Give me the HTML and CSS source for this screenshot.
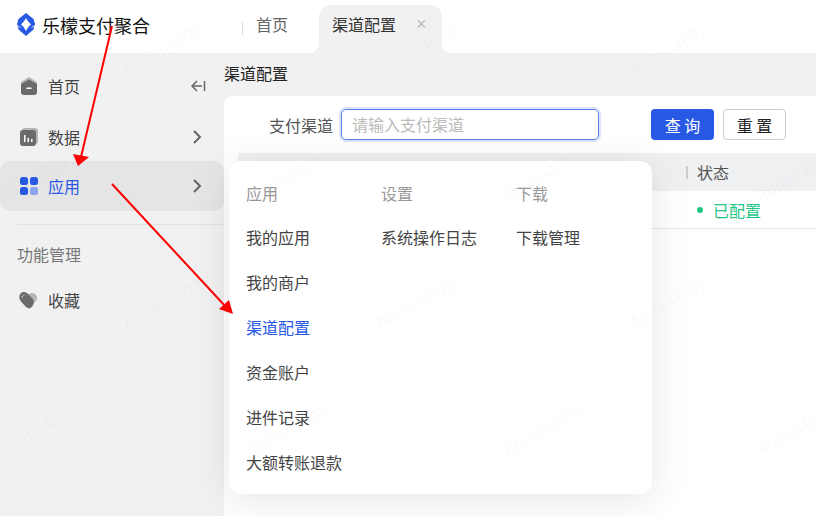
FILE: index.html
```html
<!DOCTYPE html>
<html lang="zh-CN">
<head>
<meta charset="utf-8">
<title>乐檬支付聚合</title>
<link rel="stylesheet" href="styles.css">
</head>
<body>
<div class="app">
  <header class="topbar">
    <div class="brand">
      <svg class="logo" viewBox="0 0 18 23" width="18" height="23"><path fill="#2759e5" fill-rule="evenodd" d="M9 0 16.500 6 18 11 16.500 16.500 9 23 1.500 16.500 0 11 1.500 6ZM9 5Q10.500 8.500 14 11.500 10.500 14 9 18 7.500 14 4 11.500 7.500 8.500 9 5Z"/><path d="M0 12.500 3.500 14.500M18 12.500 14.500 14.500" stroke="#fff" stroke-width=".8"/></svg>
      <span class="brand-name">乐檬支付聚合</span>
    </div>
    <nav class="tabs">
      <span class="tab-sep"></span>
      <span class="tab">首页</span>
      <span class="tab tab-active">渠道配置<span class="tab-close">×</span></span>
    </nav>
  </header>
  <div class="body">
    <aside class="sidebar">
      <div class="side-item">
        <svg class="side-icon" viewBox="0 0 18 18" width="18" height="18"><path fill="#b5b5b5" d="M9 0 17 5v4H1V5z"/><path d="M1 7 9 2.500 17 7v8a3 3 0 0 1-3 3H4a3 3 0 0 1-3-3z" fill="#6b6b6b"/><rect x="6.500" y="10.500" width="5" height="1.500" fill="#fff"/></svg>
        <span class="side-label">首页</span>
        <svg class="side-collapse" viewBox="0 0 16 14" width="16" height="14"><path d="M7 2 2 7l5 5M2 7h10M14.500 2v10" fill="none" stroke="#666" stroke-width="1.500"/></svg>
      </div>
      <div class="side-item side-item-data">
        <svg class="side-icon" viewBox="0 0 18 18" width="18" height="18"><rect x="2" y="0" width="16" height="16" rx="3" fill="#b5b5b5"/><rect y="2" width="16" height="16" rx="3" fill="#6b6b6b"/><path d="M4 7h1.500v7H4zM7.500 10H9v4H7.500zM11 11h1.500v3H11z" fill="#fff"/></svg>
        <span class="side-label">数据</span>
        <svg class="side-chevron" viewBox="0 0 10 16" width="10" height="16"><path d="m2 2 6 6-6 6" fill="none" stroke="#666" stroke-width="2"/></svg>
      </div>
      <div class="side-item side-item-active">
        <svg class="side-icon" viewBox="0 0 18 18" width="18" height="18"><rect width="8" height="8" rx="2.500" fill="#2759e5"/><rect x="10" width="8" height="8" rx="2.500" fill="#2759e5"/><rect y="10" width="8" height="8" rx="2.500" fill="#2759e5"/><rect x="10" y="10" width="8" height="8" rx="2.500" fill="#8aa5ee"/></svg>
        <span class="side-label">应用</span>
        <svg class="side-chevron" viewBox="0 0 10 16" width="10" height="16"><path d="m2 2 6 6-6 6" fill="none" stroke="#666" stroke-width="2"/></svg>
      </div>
      <div class="side-divider"></div>
      <div class="side-title">功能管理</div>
      <div class="side-item side-item-fav">
        <svg class="side-icon" viewBox="0 0 20 17" width="20" height="17"><path d="M9 3a5 5 0 1 1 8 6l-5 5z" fill="#b5b5b5"/><path d="M5 0c2 0 3 1 4 2l4 4c2 2 2.500 5 .5 8s-4 3-6.500 1L2 9.500C-1.500 5 1 0 5 0z" fill="#6b6b6b"/><path d="M3 6c0-1.500 1-3 2.500-3" stroke="#ccc" fill="none"/></svg>
        <span class="side-label">收藏</span>
      </div>
    </aside>
    <main class="main">
      <div class="crumb">渠道配置</div>
      <section class="card">
        <form class="search">
          <label class="search-label">支付渠道</label>
          <div class="search-input">请输入支付渠道</div>
          <button type="button" class="btn btn-primary">查 询</button>
          <button type="button" class="btn btn-plain">重 置</button>
        </form>
        <div class="table-head"><span class="th-state">状态</span></div>
        <div class="table-row"><span class="state"><i class="dot"></i>已配置</span></div>
      </section>
    </main>
  </div>

  <div class="menu">
    <div class="menu-col menu-col-app">
      <div class="menu-title">应用</div>
      <div class="menu-link">我的应用</div>
      <div class="menu-link">我的商户</div>
      <div class="menu-link menu-link-active">渠道配置</div>
      <div class="menu-link">资金账户</div>
      <div class="menu-link">进件记录</div>
      <div class="menu-link">大额转账退款</div>
    </div>
    <div class="menu-col menu-col-set">
      <div class="menu-title">设置</div>
      <div class="menu-link">系统操作日志</div>
    </div>
    <div class="menu-col">
      <div class="menu-title">下载</div>
      <div class="menu-link">下载管理</div>
    </div>
  </div>

  <svg class="watermarks" width="816" height="516" viewBox="0 0 816 516">
    <g class="wm-text">
      <text transform="translate(127 75) rotate(-28)">Admin4092</text>
      <text transform="translate(380 75) rotate(-28)">Admin4092</text>
      <text transform="translate(633 75) rotate(-28)">Admin4092</text>
      <text transform="translate(2 202) rotate(-28)">Admin4092</text>
      <text transform="translate(254 202) rotate(-28)">Admin4092</text>
      <text transform="translate(507 202) rotate(-28)">Admin4092</text>
      <text transform="translate(760 202) rotate(-28)">Admin4092</text>
      <text transform="translate(127 329) rotate(-28)">Admin4092</text>
      <text transform="translate(380 329) rotate(-28)">Admin4092</text>
      <text transform="translate(633 329) rotate(-28)">Admin4092</text>
      <text transform="translate(2 456) rotate(-28)">Admin4092</text>
      <text transform="translate(254 456) rotate(-28)">Admin4092</text>
      <text transform="translate(507 456) rotate(-28)">Admin4092</text>
      <text transform="translate(760 456) rotate(-28)">Admin4092</text>
    </g>
  </svg>

  <svg class="arrows" width="816" height="516" viewBox="0 0 816 516">
    <path d="M112 26 81 157" stroke="#f00" stroke-width="2" fill="none"/>
    <path d="m78 166-5-12 16 3z" fill="#f00"/>
    <path d="M112 184 226 307" stroke="#f00" stroke-width="2" fill="none"/>
    <path d="m233 314-14-5 10-9z" fill="#f00"/>
  </svg>
</div>
</body>
</html>
```

FILE: styles.css
```css
* { box-sizing: border-box; }
html, body { margin: 0; padding: 0; }
body {
  font-family: "Noto Sans CJK SC", "Liberation Sans", sans-serif;
  color: #333;
  background: #fff;
  overflow: hidden;
}
.app { position: relative; width: 816px; height: 516px; overflow: hidden; background: #fff; }

.topbar { display: flex; height: 53px; background: #fff; }
.brand { display: flex; align-items: center; width: 224px; padding: 0 0 4px 17px; gap: 7px; }
.logo { flex: none; }
.brand-name { font-size: 18px; color: #111; }
.tabs { display: flex; align-items: flex-end; flex: 1; background: #fff; }
.tab-sep { width: 1px; height: 13px; background: #ddd; margin: 0 0 18px 18px; }
.tab { display: flex; align-items: center; height: 48px; padding: 0 0 10px 13px; width: 76px; font-size: 16px; color: #666; }
.tab-active { position: relative; width: 123px; background: #f1f1f1; border-radius: 12px 12px 0 0; color: #333; }
.tab-active::before, .tab-active::after { content: ""; position: absolute; bottom: 0; width: 10px; height: 10px; }
.tab-active::before { left: -10px; background: radial-gradient(circle at 0 0, #fff 10px, #f1f1f1 10.500px); }
.tab-active::after { right: -10px; background: radial-gradient(circle at 100% 0, #fff 10px, #f1f1f1 10.500px); }
.tab-close { margin-left: 20px; font-size: 18px; line-height: 16px; color: #bbb; font-family: "Liberation Sans", sans-serif; }

.body { display: flex; height: 463px; }
.sidebar { width: 224px; flex: none; background: #f1f1f1; padding-top: 8px; }
.side-item { display: flex; align-items: center; height: 50px; padding: 0 22px 0 20px; border-radius: 0 10px 10px 0; }
.side-item-data { padding-top: 2px; }
.side-item-active { background: #e5e5e5; border-radius: 10px; padding-bottom: 1px; }
.side-icon { flex: none; }
.side-label { flex: 1; margin-left: 10px; font-size: 16px; color: #444; }
.side-item-active .side-label { color: #2759e5; }
.side-collapse { margin-right: -4px; }
.side-divider { height: 1px; margin: 13px 0 0 17px; background: #e2e2e2; }
.side-title { margin: 18px 0 0 17px; font-size: 16px; line-height: 22px; color: #777; }
.side-item-fav { margin-top: 10px; height: 50px; padding-left: 19px; }
.side-item-fav .side-label { margin-left: 9px; }

.main { flex: 1; background: #f1f1f1; display: flex; flex-direction: column; }
.crumb { height: 43px; padding-top: 8px; font-size: 16px; line-height: 24px; color: #222; }
.card { flex: 1; background: #fff; border-radius: 8px 0 0 0; padding: 12px 0 0 14px; }
.search { display: flex; align-items: center; height: 33px; }
.search-label { width: 95px; text-align: right; font-size: 16px; color: #555; }
.search-input { width: 258px; height: 31px; margin-left: 8px; padding-left: 10px; border: 1px solid #5a80e6; border-radius: 5px; box-shadow: 0 0 0 2px #dbe4fb; font-size: 16px; line-height: 29px; color: #bbb; }
.btn { height: 31px; border-radius: 4px; font-family: inherit; font-size: 16px; padding: 0; }
.btn-primary { width: 63px; margin-left: 52px; border: 0; background: #2759e5; color: #fff; }
.btn-plain { width: 63px; margin-left: 9px; border: 1px solid #ccc; background: #fff; color: #222; }
.table-head { height: 38px; margin-top: 12px; background: #eff0f2; position: relative; display: flex; align-items: center; }
.th-state { margin-left: 448px; padding-left: 9px; border-left: 2px solid #ccc; font-size: 16px; line-height: 13px; color: #555; }
.table-row { height: 38px; border-bottom: 1px solid #e6e6e6; display: flex; align-items: center; }
.state { margin-left: 459px; font-size: 16px; color: #1fc585; display: flex; align-items: center; }
.dot { width: 6px; height: 6px; border-radius: 50%; background: #1fc585; margin-right: 10px; }

.menu { position: absolute; left: 229px; top: 161px; width: 423px; height: 333px; display: flex; padding: 17px 0 0 17px; background: #fff; border-radius: 12px; box-shadow: 0 6px 40px rgba(0,0,0,.1); }
.menu-col { width: 135px; }
.menu-title { height: 30px; font-size: 16px; line-height: 30px; color: #999; }
.menu-link { height: 45px; font-size: 16px; line-height: 45px; color: #444; }
.menu-col .menu-title + .menu-link { margin-top: 7px; }
.menu-link-active { color: #2759e5; }

.watermarks, .arrows { position: absolute; left: 0; top: 0; pointer-events: none; }
.wm-text text { font-family: Roboto, "Liberation Sans", sans-serif; font-size: 17px; fill: #000; fill-opacity: .03; }
```
